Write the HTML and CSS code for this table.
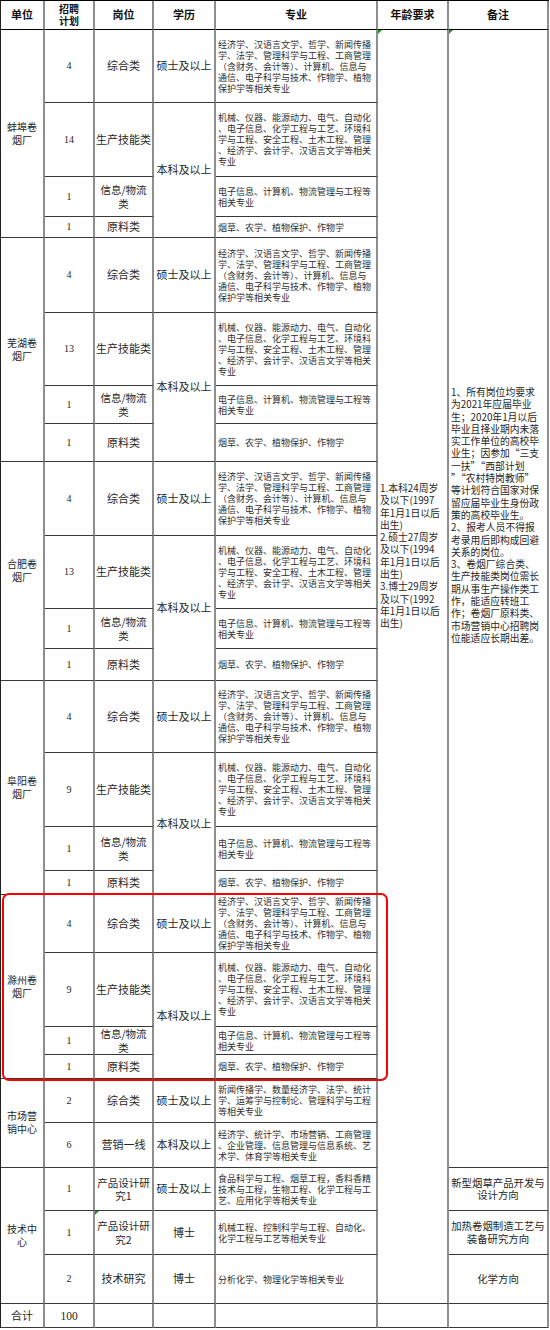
FILE: index.html
```html
<!DOCTYPE html>
<html lang="zh-CN">
<head>
<meta charset="utf-8">
<title>招聘计划表</title>
<link rel="stylesheet" href="styles.css">
</head>
<body>
<div class="sheet">
  <div class="grid">
    <div class="c head">单位</div>
    <div class="c head two">招聘<br>计划</div>
    <div class="c head">岗位</div>
    <div class="c head">学历</div>
    <div class="c head">专业</div>
    <div class="c head">年龄要求</div>
    <div class="c head">备注</div>

    <!-- 蚌埠卷烟厂 -->
    <div class="c unit s4">蚌埠卷<br>烟厂</div>
    <div class="c num">4</div>
    <div class="c">综合类</div>
    <div class="c">硕士及以上</div>
    <div class="c major">经济学、汉语言文学、哲学、新闻传播<br>学、法学、管理科学与工程、工商管理<br>（含财务、会计等）、计算机、信息与<br>通信、电子科学与技术、作物学、植物<br>保护学等相关专业</div>
    <div class="c age s25 flag">1.本科24周岁<br>及以下(1997<br>年1月1日以后<br>出生)<br>2.硕士27周岁<br>及以下(1994<br>年1月1日以后<br>出生)<br>3.博士29周岁<br>及以下(1992<br>年1月1日以后<br>出生)</div>
    <div class="c note s22 flag">1、所有岗位均要求<br>为2021年应届毕业<br>生；2020年1月以后<br>毕业且择业期内未落<br>实工作单位的高校毕<br>业生；因参加“三支<br>一扶”“西部计划<br>”“农村特岗教师”<br>等计划符合国家对保<br>留应届毕业生身份政<br>策的高校毕业生。<br>2、报考人员不得报<br>考录用后即构成回避<br>关系的岗位。<br>3、卷烟厂综合类、<br>生产技能类岗位需长<br>期从事生产操作类工<br>作，能适应转班工<br>作；卷烟厂原料类、<br>市场营销中心招聘岗<br>位能适应长期出差。</div>
    <div class="c num">14</div>
    <div class="c">生产技能类</div>
    <div class="c s3">本科及以上</div>
    <div class="c major">机械、仪器、能源动力、电气、自动化<br>、电子信息、化学工程与工艺、环境科<br>学与工程、安全工程、土木工程、管理<br>、经济学、会计学、汉语言文学等相关<br>专业</div>
    <div class="c num">1</div>
    <div class="c wrap">信息/物流<br>类</div>
    <div class="c major">电子信息、计算机、物流管理与工程等<br>相关专业</div>
    <div class="c num">1</div>
    <div class="c">原料类</div>
    <div class="c major">烟草、农学、植物保护、作物学</div>

    <!-- 芜湖卷烟厂 -->
    <div class="c unit s4">芜湖卷<br>烟厂</div>
    <div class="c num">4</div>
    <div class="c">综合类</div>
    <div class="c">硕士及以上</div>
    <div class="c major">经济学、汉语言文学、哲学、新闻传播<br>学、法学、管理科学与工程、工商管理<br>（含财务、会计等）、计算机、信息与<br>通信、电子科学与技术、作物学、植物<br>保护学等相关专业</div>
    <div class="c num">13</div>
    <div class="c">生产技能类</div>
    <div class="c s3">本科及以上</div>
    <div class="c major">机械、仪器、能源动力、电气、自动化<br>、电子信息、化学工程与工艺、环境科<br>学与工程、安全工程、土木工程、管理<br>、经济学、会计学、汉语言文学等相关<br>专业</div>
    <div class="c num">1</div>
    <div class="c wrap">信息/物流<br>类</div>
    <div class="c major">电子信息、计算机、物流管理与工程等<br>相关专业</div>
    <div class="c num">1</div>
    <div class="c">原料类</div>
    <div class="c major">烟草、农学、植物保护、作物学</div>

    <!-- 合肥卷烟厂 -->
    <div class="c unit s4">合肥卷<br>烟厂</div>
    <div class="c num">4</div>
    <div class="c">综合类</div>
    <div class="c">硕士及以上</div>
    <div class="c major">经济学、汉语言文学、哲学、新闻传播<br>学、法学、管理科学与工程、工商管理<br>（含财务、会计等）、计算机、信息与<br>通信、电子科学与技术、作物学、植物<br>保护学等相关专业</div>
    <div class="c num">13</div>
    <div class="c">生产技能类</div>
    <div class="c s3">本科及以上</div>
    <div class="c major">机械、仪器、能源动力、电气、自动化<br>、电子信息、化学工程与工艺、环境科<br>学与工程、安全工程、土木工程、管理<br>、经济学、会计学、汉语言文学等相关<br>专业</div>
    <div class="c num">1</div>
    <div class="c wrap">信息/物流<br>类</div>
    <div class="c major">电子信息、计算机、物流管理与工程等<br>相关专业</div>
    <div class="c num">1</div>
    <div class="c">原料类</div>
    <div class="c major">烟草、农学、植物保护、作物学</div>

    <!-- 阜阳卷烟厂 -->
    <div class="c unit s4">阜阳卷<br>烟厂</div>
    <div class="c num">4</div>
    <div class="c">综合类</div>
    <div class="c">硕士及以上</div>
    <div class="c major">经济学、汉语言文学、哲学、新闻传播<br>学、法学、管理科学与工程、工商管理<br>（含财务、会计等）、计算机、信息与<br>通信、电子科学与技术、作物学、植物<br>保护学等相关专业</div>
    <div class="c num">9</div>
    <div class="c">生产技能类</div>
    <div class="c s3">本科及以上</div>
    <div class="c major">机械、仪器、能源动力、电气、自动化<br>、电子信息、化学工程与工艺、环境科<br>学与工程、安全工程、土木工程、管理<br>、经济学、会计学、汉语言文学等相关<br>专业</div>
    <div class="c num">1</div>
    <div class="c wrap">信息/物流<br>类</div>
    <div class="c major">电子信息、计算机、物流管理与工程等<br>相关专业</div>
    <div class="c num">1</div>
    <div class="c">原料类</div>
    <div class="c major">烟草、农学、植物保护、作物学</div>

    <!-- 滁州卷烟厂 -->
    <div class="c unit s4">滁州卷<br>烟厂</div>
    <div class="c num">4</div>
    <div class="c">综合类</div>
    <div class="c">硕士及以上</div>
    <div class="c major">经济学、汉语言文学、哲学、新闻传播<br>学、法学、管理科学与工程、工商管理<br>（含财务、会计等）、计算机、信息与<br>通信、电子科学与技术、作物学、植物<br>保护学等相关专业</div>
    <div class="c num">9</div>
    <div class="c">生产技能类</div>
    <div class="c s3">本科及以上</div>
    <div class="c major">机械、仪器、能源动力、电气、自动化<br>、电子信息、化学工程与工艺、环境科<br>学与工程、安全工程、土木工程、管理<br>、经济学、会计学、汉语言文学等相关<br>专业</div>
    <div class="c num">1</div>
    <div class="c wrap">信息/物流<br>类</div>
    <div class="c major">电子信息、计算机、物流管理与工程等<br>相关专业</div>
    <div class="c num">1</div>
    <div class="c">原料类</div>
    <div class="c major">烟草、农学、植物保护、作物学</div>

    <!-- 市场营销中心 -->
    <div class="c unit s2">市场营<br>销中心</div>
    <div class="c num">2</div>
    <div class="c">综合类</div>
    <div class="c">硕士及以上</div>
    <div class="c major">新闻传播学、数量经济学、法学、统计<br>学、运筹学与控制论、管理科学与工程<br>等相关专业</div>
    <div class="c num">6</div>
    <div class="c">营销一线</div>
    <div class="c">本科及以上</div>
    <div class="c major">经济学、统计学、市场营销、工商管理<br>、企业管理、信息管理与信息系统、艺<br>术学、体育学等相关专业</div>

    <!-- 技术中心 -->
    <div class="c unit s3">技术中<br>心</div>
    <div class="c num">1</div>
    <div class="c wrap">产品设计研<br>究1</div>
    <div class="c">硕士及以上</div>
    <div class="c major">食品科学与工程、烟草工程，香料香精<br>技术与工程，生物工程、化学工程与工<br>艺、应用化学等相关专业</div>
    <div class="c dir">新型烟草产品开发与<br>设计方向</div>
    <div class="c num">1</div>
    <div class="c wrap flag">产品设计研<br>究2</div>
    <div class="c">博士</div>
    <div class="c major">机械工程、控制科学与工程、自动化、<br>化学工程与工艺等相关专业</div>
    <div class="c dir">加热卷烟制造工艺与<br>装备研究方向</div>
    <div class="c num">2</div>
    <div class="c">技术研究</div>
    <div class="c">博士</div>
    <div class="c major">分析化学、物理化学等相关专业</div>
    <div class="c dir">化学方向</div>

    <!-- 合计 -->
    <div class="c">合计</div>
    <div class="c num total">100</div>
    <div class="c"></div>
    <div class="c"></div>
    <div class="c"></div>
    <div class="c"></div>
    <div class="c"></div>
  </div>
  <div class="mark"></div>
</div>
</body>
</html>
```

FILE: styles.css
```css
* {
  box-sizing: border-box;
}

body {
  margin: 0;
  background: #ffffff;
}

.sheet {
  position: relative;
  width: 550px;
}

.grid {
  display: grid;
  grid-template-columns: 44px 50px 59px 62px 162px 71px 100px;
  grid-template-rows:
    29px
    73px 74px 40px 21px
    75px 73px 38px 38px
    74px 73px 40px 32px
    72px 74px 44px 24px
    58px 74px 28px 24px
    44px 45px
    43px 44px 49px
    24px;
  width: 549px;
  border-top: 1px solid #000;
  border-left: 1px solid #222;
  font-family: "Noto Sans CJK SC", "Noto Sans", sans-serif;
  color: #262626;
}

.c {
  position: relative;
  min-width: 0;
  min-height: 0;
  display: flex;
  align-items: center;
  justify-content: center;
  text-align: center;
  border-right: 2px solid #8e8e8e;
  border-bottom: 1px solid #383838;
  font-size: 11px;
  line-height: 13.2px;
  white-space: nowrap;
}

.head {
  font-weight: 700;
  border-bottom-color: #000;
  color: #111;
}

.head.two {
  font-size: 10px;
  line-height: 12.4px;
}

.unit {
  font-size: 10px;
  line-height: 12.6px;
}

.wrap {
  font-size: 10.5px;
  line-height: 13.4px;
}

.num {
  font-family: "Liberation Serif", serif;
  font-size: 10px;
  line-height: 12px;
}

.total {
  font-size: 11.5px;
  line-height: 14px;
}

.major {
  justify-content: flex-start;
  text-align: left;
  padding-left: 2px;
  font-size: 9px;
  line-height: 11px;
  color: #2e2e2e;
}

.age,
.note {
  display: block;
  text-align: left;
  padding-left: 2px;
  font-size: 9.8px;
  line-height: 12.3px;
}

.age {
  padding-top: 452px;
}

.note {
  padding-top: 356px;
}

.dir {
  font-size: 10.4px;
  line-height: 12.5px;
}

.s2 { grid-row: span 2; }
.s3 { grid-row: span 3; }
.s4 { grid-row: span 4; }
.s22 { grid-row: span 22; }
.s25 { grid-row: span 25; }

.flag::before {
  content: "";
  position: absolute;
  left: 0;
  top: 0;
  border-top: 4px solid #1b9a1b;
  border-right: 4px solid transparent;
}

.mark {
  position: absolute;
  left: 2px;
  top: 893px;
  width: 386px;
  height: 188px;
  border: 2px solid #ff0000;
  border-radius: 7px;
  pointer-events: none;
}
```
